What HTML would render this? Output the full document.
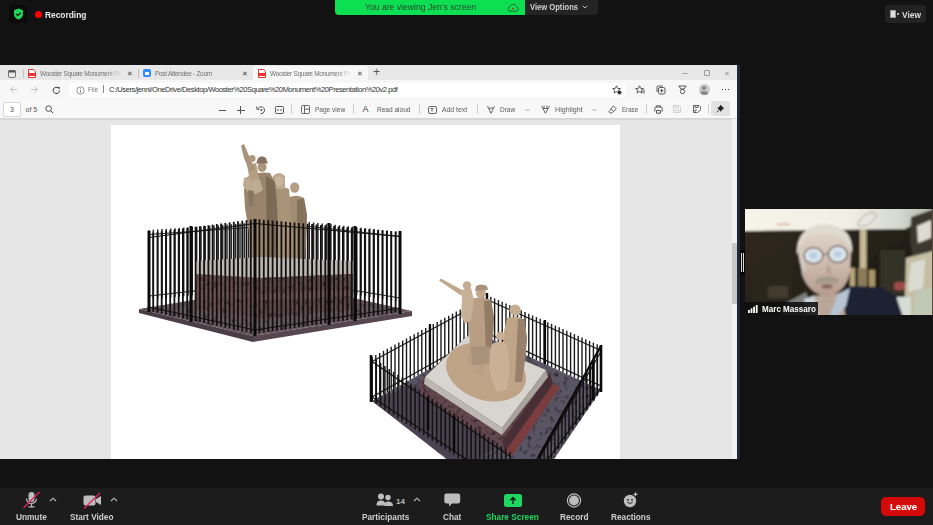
<!DOCTYPE html>
<html><head><meta charset="utf-8">
<style>
*{margin:0;padding:0;box-sizing:border-box}
html,body{width:933px;height:525px;overflow:hidden;background:#121212;font-family:"Liberation Sans",sans-serif}
.abs{position:absolute}
#top .rec{left:44.5px;top:8.5px;line-height:11px;color:#e8e8e8;font-size:9.8px;font-weight:bold;transform:scaleX(0.855);transform-origin:0 0}
#banner{left:335px;top:0;width:190px;height:15px;background:#0ce052;border-radius:0 0 0 4px}
#banner span{position:absolute;left:29.8px;top:1.5px;line-height:10px;font-size:8.8px;color:#27422e;white-space:nowrap;transform:scaleX(0.98);transform-origin:0 0}
#vopt{left:525px;top:0;width:73px;height:15px;background:#242424;border-radius:0 0 4px 0}
#vopt span{position:absolute;left:5px;top:1.5px;line-height:10px;font-size:9px;color:#d0d0d0;font-weight:bold;white-space:nowrap;transform:scaleX(0.845);transform-origin:0 0}
#viewbtn{left:885px;top:5px;width:41px;height:18px;background:#222;border-radius:3px}
#browser{left:0;top:65px;width:737px;height:394px;background:#e6e6e6;overflow:hidden}
#tabs{left:0;top:0;width:737px;height:15px;background:#e8e8e8}
#addr{left:0;top:15px;width:737px;height:19px;background:#f7f7f7}
#tool{left:0;top:34px;width:737px;height:20px;background:#f8f8f8;border-bottom:1px solid #d6d6d6;box-shadow:0 1px 1px rgba(0,0,0,0.06)}
#page{left:111px;top:60px;width:509px;height:340px;background:#fff}
#cam{left:745px;top:209px;width:188px;height:106px;background:#5a4a3a;overflow:hidden}
#bar{left:0;top:488px;width:933px;height:37px;background:#1c1c1c}
.lbl{position:absolute;top:23.5px;font-size:9.5px;line-height:10px;color:#cfcfcf;font-weight:bold;white-space:nowrap;transform:scaleX(0.87);transform-origin:0 0}
#leave{left:881px;top:497px;width:44px;height:19px;background:#d40a0a;border-radius:5px}
#leave span{position:absolute;left:9px;top:4px;line-height:11px;font-size:9.6px;color:#fff;font-weight:bold;white-space:nowrap}
.tt{top:3.8px;font-size:6.5px;line-height:9px;color:#707070;white-space:nowrap;overflow:hidden;letter-spacing:-0.3px;-webkit-mask-image:linear-gradient(90deg,#000 80%,transparent)}
.x{top:3.5px;font-size:7px;line-height:9px;color:#444}
.ut{top:4.5px;font-size:7.5px;line-height:9px;color:#333;white-space:nowrap}
.bt{font-size:7px;line-height:9px;color:#555;white-space:nowrap}
.tb{top:5.5px;font-size:7.6px;line-height:9px;color:#5a5a5a;white-space:nowrap;transform-origin:0 0}
.sep{top:5px;width:1px;height:10px;background:#cfcfcf}
</style></head><body>
<div id="top">
  <div class="abs" style="left:9px;top:5px;width:18px;height:18px;background:#0b0b0b;border-radius:4px"></div>
  <svg class="abs" style="left:13px;top:8px" width="11" height="12" viewBox="0 0 11 12"><path d="M5.5 0.5 L10 2.2 V6 C10 8.8 8 10.6 5.5 11.6 C3 10.6 1 8.8 1 6 V2.2Z" fill="#1fd65a"/><path d="M3.3 6 L4.9 7.5 L7.8 4.6" stroke="#0b0b0b" stroke-width="1.2" fill="none"/></svg>
  <div class="abs" style="left:34.5px;top:10.5px;width:7.5px;height:7.5px;border-radius:50%;background:#f00"></div>
  <div class="abs rec">Recording</div>
</div>
<div id="banner" class="abs"><span>You are viewing Jen's screen</span><svg class="abs" style="left:171.5px;top:3px" width="12" height="9" viewBox="0 0 12 9"><path d="M3 8.2H9.3A2.2 2.2 0 0 0 9.6 3.9A3.3 3.3 0 0 0 3.3 3.3A2.5 2.5 0 0 0 3 8.2Z" fill="none" stroke="#1d5a2e" stroke-width="0.9"/><circle cx="6" cy="5.6" r="0.9" fill="#e01010"/></svg></div>
<div id="vopt" class="abs"><span>View Options</span><svg class="abs" style="left:57px;top:5px" width="6" height="4" viewBox="0 0 6 4"><path d="M0.7 0.8L3 3L5.3 0.8" fill="none" stroke="#cfcfcf" stroke-width="0.9"/></svg></div>
<div id="viewbtn" class="abs"><div class="abs" style="left:5px;top:4.5px;width:6px;height:8.5px;background:#ddd;border:0.5px solid #999"></div><div class="abs" style="left:11.5px;top:8px;width:2px;height:2px;background:#ddd;border-radius:50%"></div><span style="position:absolute;left:16.5px;top:4.5px;line-height:10px;font-size:9.3px;color:#ddd;font-weight:bold;white-space:nowrap;transform:scaleX(0.9);transform-origin:0 0">View</span></div>

<div id="browser" class="abs">
  <div id="tabs" class="abs">
    <svg class="abs" style="left:8px;top:5px" width="8" height="8" viewBox="0 0 8 8"><rect x="0.5" y="0.5" width="7" height="7" rx="1.2" fill="none" stroke="#555" stroke-width="0.8"/><rect x="0.5" y="0.5" width="7" height="2" fill="#555"/></svg>
    <div class="abs" style="left:22.5px;top:4px;width:1px;height:9px;background:#c4c4c4"></div>
    <svg class="abs" style="left:28px;top:4px" width="8" height="9" viewBox="0 0 8 9"><path d="M0.5 0.5H5.5L7.5 2.5V8.5H0.5Z" fill="#fff" stroke="#d33" stroke-width="1"/><rect x="0.5" y="4" width="7" height="3" fill="#e33"/></svg>
    <div class="abs tt" style="left:40px;width:82px">Wooster Square Monument Presentation</div>
    <div class="abs x" style="left:127px">&#x2715;</div>
    <div class="abs" style="left:138px;top:4px;width:1px;height:9px;background:#c4c4c4"></div>
    <div class="abs" style="left:143px;top:4px;width:8px;height:8px;border-radius:2px;background:#2d8cff"></div>
    <div class="abs" style="left:144.5px;top:6.5px;width:4px;height:3px;background:#fff;border-radius:0.5px"></div>
    <div class="abs tt" style="left:155px;width:80px">Post Attendee - Zoom</div>
    <div class="abs x" style="left:242px">&#x2715;</div>
    <div class="abs" style="left:253px;top:1px;width:115px;height:14px;background:#f7f7f7;border-radius:3px 3px 0 0"></div>
    <svg class="abs" style="left:258px;top:4px" width="8" height="9" viewBox="0 0 8 9"><path d="M0.5 0.5H5.5L7.5 2.5V8.5H0.5Z" fill="#fff" stroke="#d33" stroke-width="1"/><rect x="0.5" y="4" width="7" height="3" fill="#e33"/></svg>
    <div class="abs tt" style="left:270px;width:82px">Wooster Square Monument Presentation</div>
    <div class="abs x" style="left:357px">&#x2715;</div>
    <div class="abs" style="left:373px;top:0px;font-size:12px;color:#555;line-height:15px">+</div>
    <div class="abs" style="left:682px;top:7.5px;width:5.5px;height:1px;background:#aaa"></div>
    <div class="abs" style="left:703.5px;top:5px;width:6px;height:6px;border:1px solid #999;border-radius:1px"></div>
    <div class="abs x" style="left:724px;color:#999">&#x2715;</div>
  </div>
  <div id="addr" class="abs">
    <svg class="abs" style="left:9px;top:5px" width="9" height="9" viewBox="0 0 9 9"><path d="M8 4.5H1.5M4.5 1.5L1.5 4.5L4.5 7.5" stroke="#bbb" stroke-width="0.9" fill="none"/></svg>
    <svg class="abs" style="left:30px;top:5px" width="9" height="9" viewBox="0 0 9 9"><path d="M1 4.5H7.5M4.5 1.5L7.5 4.5L4.5 7.5" stroke="#bbb" stroke-width="0.9" fill="none"/></svg>
    <svg class="abs" style="left:51.5px;top:5.5px" width="9" height="9" viewBox="0 0 9 9"><path d="M7.6 4.5A3.2 3.2 0 1 1 6.5 2" stroke="#333" stroke-width="1" fill="none"/><path d="M5.3 0.8L7.8 1.2L7.3 3.6Z" fill="#333"/></svg>
    <div class="abs" style="left:69px;top:3px;width:557px;height:14px;background:#fff;border-radius:3px"></div>
    <svg class="abs" style="left:75.5px;top:5.5px" width="9" height="9" viewBox="0 0 9 9"><circle cx="4.5" cy="4.5" r="3.7" stroke="#777" stroke-width="0.8" fill="none"/><path d="M4.5 4V6.6M4.5 2.4V3.1" stroke="#777" stroke-width="0.9"/></svg>
    <div class="abs ut" style="left:87.5px;color:#808080;transform:scaleX(0.85);transform-origin:0 0">File</div>
    <div class="abs" style="left:103px;top:5px;width:1px;height:8px;background:#888"></div>
    <div class="abs ut" style="left:109px;letter-spacing:-0.41px">C:/Users/jenni/OneDrive/Desktop/Wooster%20Square%20Monument%20Presentation%20v2.pdf</div>
    <svg class="abs" style="left:612px;top:5px" width="10" height="10" viewBox="0 0 10 10"><path d="M4.5 0.8L5.7 3.4L8.4 3.6L6.3 5.3L6.9 8L4.5 6.6L2.1 8L2.7 5.3L0.6 3.6L3.3 3.4Z" fill="none" stroke="#333" stroke-width="0.8"/><circle cx="7.5" cy="7.5" r="2" fill="#333"/></svg>
    <svg class="abs" style="left:635px;top:5px" width="10" height="10" viewBox="0 0 10 10"><path d="M4.5 0.8L5.7 3.4L8.4 3.6L6.3 5.3L6.9 8L4.5 6.6L2.1 8L2.7 5.3L0.6 3.6L3.3 3.4Z" fill="none" stroke="#333" stroke-width="0.8"/><path d="M8 4.5V8.5M9.2 4.5V8.5" stroke="#333" stroke-width="0.6"/></svg>
    <svg class="abs" style="left:656px;top:5px" width="10" height="10" viewBox="0 0 10 10"><rect x="2.5" y="2.5" width="6.5" height="6.5" rx="1.5" fill="none" stroke="#333" stroke-width="0.8"/><path d="M1 7V2.5A1.5 1.5 0 0 1 2.5 1H7" fill="none" stroke="#333" stroke-width="0.8"/><path d="M5.7 4V7.5M4 5.7H7.5" stroke="#333" stroke-width="0.8"/></svg>
    <svg class="abs" style="left:678px;top:5px" width="9" height="10" viewBox="0 0 9 10"><path d="M0.8 1H8.2L6 4H3Z" fill="none" stroke="#333" stroke-width="0.8"/><circle cx="4.5" cy="6.5" r="2.2" fill="none" stroke="#333" stroke-width="0.8"/></svg>
    <div class="abs" style="left:698.5px;top:4px;width:11px;height:11px;border-radius:50%;background:#c9c9c9;overflow:hidden"><div class="abs" style="left:3.5px;top:2px;width:4px;height:4px;border-radius:50%;background:#8a8a8a"></div><div class="abs" style="left:1.5px;top:7px;width:8px;height:6px;border-radius:50%;background:#8a8a8a"></div></div>
    <div class="abs" style="left:722px;top:9px;width:1.3px;height:1.3px;background:#333;box-shadow:3px 0 #333,6px 0 #333"></div>
  </div>
  <div id="tool" class="abs">
    <div class="abs" style="left:2.5px;top:2.5px;width:18.5px;height:15.5px;background:#fff;border:1px solid #d6d6d6;border-radius:2px"></div>
    <div class="abs bt" style="left:10px;top:6px">3</div>
    <div class="abs bt" style="left:25.5px;top:6px">of 5</div>
    <svg class="abs" style="left:45px;top:6px" width="9" height="9" viewBox="0 0 9 9"><circle cx="3.6" cy="3.6" r="2.8" fill="none" stroke="#444" stroke-width="0.9"/><path d="M5.6 5.6L8.2 8.2" stroke="#444" stroke-width="1"/></svg>
    <div class="abs" style="left:218.5px;top:10.5px;width:7px;height:0.9px;background:#555"></div>
    <div class="abs" style="left:237px;top:10.5px;width:7.5px;height:0.9px;background:#555"></div>
    <div class="abs" style="left:240.3px;top:7px;width:0.9px;height:7.5px;background:#555"></div>
    <svg class="abs" style="left:256px;top:6px" width="10" height="10" viewBox="0 0 10 10"><path d="M2 3.5A3.5 3.5 0 1 1 4.5 8.7" fill="none" stroke="#444" stroke-width="0.9"/><path d="M0.8 1.5V4.3H3.5" fill="none" stroke="#444" stroke-width="0.9"/><circle cx="5.3" cy="5" r="0.9" fill="#444"/></svg>
    <svg class="abs" style="left:275px;top:6.5px" width="9" height="8" viewBox="0 0 9 8"><rect x="0.5" y="0.5" width="8" height="7" rx="1" fill="none" stroke="#444" stroke-width="0.9"/><path d="M2 4H4M5 4H7" stroke="#444" stroke-width="0.9"/></svg>
    <div class="abs sep" style="left:291px"></div>
    <svg class="abs" style="left:301px;top:6px" width="9" height="9" viewBox="0 0 9 9"><rect x="0.5" y="0.5" width="8" height="8" rx="1" fill="none" stroke="#444" stroke-width="0.8"/><path d="M3.5 0.5V8.5M3.5 4.2H8.5" stroke="#444" stroke-width="0.8"/></svg>
    <div class="abs tb" style="left:315px;transform:scaleX(0.86)">Page view</div>
    <div class="abs sep" style="left:353px"></div>
    <div class="abs" style="left:362.5px;top:5px;font-size:9px;color:#444;line-height:10px">A</div>
    <div class="abs" style="left:368.5px;top:4px;font-size:5px;color:#444;line-height:6px">&#x2E0C;</div>
    <div class="abs tb" style="left:377px;transform:scaleX(0.86)">Read aloud</div>
    <div class="abs sep" style="left:418.5px"></div>
    <svg class="abs" style="left:428px;top:6.5px" width="9" height="8" viewBox="0 0 9 8"><rect x="0.5" y="0.5" width="8" height="7" rx="1.5" fill="none" stroke="#444" stroke-width="0.8"/><path d="M2.5 2.5H5.5M4 2.5V5.5" stroke="#444" stroke-width="0.8"/></svg>
    <div class="abs tb" style="left:442px;transform:scaleX(0.9)">Add text</div>
    <div class="abs sep" style="left:476.5px"></div>
    <svg class="abs" style="left:486.5px;top:6px" width="8" height="9" viewBox="0 0 8 9"><path d="M0.5 1L4 8.3L7.5 1" fill="none" stroke="#444" stroke-width="0.8"/><path d="M2 3.2H6" stroke="#444" stroke-width="0.8"/></svg>
    <div class="abs tb" style="left:500px;transform:scaleX(0.85)">Draw</div>
    <svg class="abs" style="left:524.5px;top:9px" width="5" height="4" viewBox="0 0 5 4"><path d="M0.5 1L2.5 3L4.5 1" fill="none" stroke="#888" stroke-width="0.7"/></svg>
    <svg class="abs" style="left:540.5px;top:6px" width="9" height="9" viewBox="0 0 9 9"><path d="M0.5 1L4.5 8.3L8.5 1" fill="none" stroke="#444" stroke-width="0.8"/><path d="M2.2 3.5H6.8M3 0.5V3.5M6 0.5V3.5" stroke="#444" stroke-width="0.8"/></svg>
    <div class="abs tb" style="left:554.8px;transform:scaleX(0.94)">Highlight</div>
    <svg class="abs" style="left:591.5px;top:9px" width="5" height="4" viewBox="0 0 5 4"><path d="M0.5 1L2.5 3L4.5 1" fill="none" stroke="#888" stroke-width="0.7"/></svg>
    <svg class="abs" style="left:607.5px;top:5.5px" width="9" height="9" viewBox="0 0 9 9"><path d="M5.3 0.8L8.2 3.7L3.9 8H2L0.8 6.8L5.3 0.8Z" fill="none" stroke="#444" stroke-width="0.8"/><path d="M3 3.8L5.2 6" stroke="#444" stroke-width="0.8"/></svg>
    <div class="abs tb" style="left:621.7px;transform:scaleX(0.81)">Erase</div>
    <div class="abs sep" style="left:646px"></div>
    <svg class="abs" style="left:653.5px;top:6px" width="9" height="9" viewBox="0 0 9 9"><path d="M0.8 6.5V3.5A1.5 1.5 0 0 1 2.3 2H6.7A1.5 1.5 0 0 1 8.2 3.5V6.5" fill="none" stroke="#444" stroke-width="0.9"/><path d="M2.5 5.5H6.5V8.2H2.5Z" fill="none" stroke="#444" stroke-width="0.9"/><path d="M2.5 2V0.8H6.5V2" fill="none" stroke="#444" stroke-width="0.8"/></svg>
    <svg class="abs" style="left:673px;top:6px" width="8" height="8" viewBox="0 0 8 8"><path d="M0.5 0.5H6L7.5 2V7.5H0.5Z" fill="none" stroke="#c8c8c8" stroke-width="0.8"/><path d="M2 0.5V2.5H5V0.5M2 7.5V5H6V7.5" fill="none" stroke="#c8c8c8" stroke-width="0.8"/></svg>
    <svg class="abs" style="left:692.5px;top:5.5px" width="9" height="9" viewBox="0 0 9 9"><path d="M0.5 0.5H6L7.5 2V4M4 7.5H0.5V0.5" fill="none" stroke="#444" stroke-width="0.8"/><path d="M2 0.5V2.5H5V0.5M2 7.5V5H4" fill="none" stroke="#444" stroke-width="0.8"/><path d="M8.3 4.5L5 7.8L4.3 8.4L4.6 7.2L7.6 4.2Z" fill="#444"/></svg>
    <div class="abs sep" style="left:708px"></div>
    <div class="abs" style="left:710.5px;top:2px;width:19px;height:15px;background:#e2e2e2;border-radius:2px"></div>
    <svg class="abs" style="left:715.5px;top:5px" width="9" height="9" viewBox="0 0 9 9"><path d="M4.5 0.8L8.2 4.5L7 5L5.2 6.8L5.2 8L1 3.8L2.2 3.8L4 2Z" fill="#222"/><path d="M2.5 6.5L0.6 8.4" stroke="#222" stroke-width="0.9"/></svg>
  </div>
  <div class="abs" style="left:731.5px;top:54px;width:5.5px;height:340px;background:#f2f2f2"></div>
  <div class="abs" style="left:732px;top:178px;width:5px;height:61px;background:#c8c8c8"></div>
  <div id="page" class="abs"><svg class="abs" style="left:0;top:0" width="509" height="340" viewBox="111 125 509 340"><defs><filter id="mot" x="0" y="0" width="100%" height="100%"><feTurbulence type="fractalNoise" baseFrequency="0.22" numOctaves="3" seed="7" result="n"/><feColorMatrix in="n" type="matrix" values="0 0 0 0 0  0 0 0 0 0  0 0 0 0 0  0 0 0 -2.2 1.05" result="a"/><feComposite in="a" in2="SourceGraphic" operator="in" result="d"/><feMerge><feMergeNode in="SourceGraphic"/><feMergeNode in="d"/></feMerge></filter></defs><polygon points="139.0,309.0 290.0,284.0 412.0,311.0 253.0,336.0" fill="#6a5a60" filter="url(#mot)"/><polygon points="139.0,309.0 253.0,336.0 253.0,342.0 139.0,313.0" fill="#4a3e44" /><polygon points="253.0,336.0 412.0,311.0 412.0,316.0 253.0,342.0" fill="#55474d" /><g stroke="#2a2a2a" stroke-width="1.5"><line x1="149.0" y1="230.0" x2="149.0" y2="300.0"/><line x1="153.3" y1="229.7" x2="153.3" y2="299.5"/><line x1="157.7" y1="229.4" x2="157.7" y2="299.0"/><line x1="162.0" y1="229.1" x2="162.0" y2="298.5"/><line x1="166.3" y1="228.8" x2="166.3" y2="298.1"/><line x1="170.7" y1="228.5" x2="170.7" y2="297.6"/><line x1="175.0" y1="228.2" x2="175.0" y2="297.1"/><line x1="179.3" y1="227.9" x2="179.3" y2="296.6"/><line x1="183.7" y1="227.6" x2="183.7" y2="296.1"/><line x1="188.0" y1="227.3" x2="188.0" y2="295.6"/><line x1="192.3" y1="227.0" x2="192.3" y2="295.2"/><line x1="196.7" y1="226.7" x2="196.7" y2="294.7"/><line x1="201.0" y1="226.4" x2="201.0" y2="294.2"/><line x1="205.3" y1="226.1" x2="205.3" y2="293.7"/><line x1="209.7" y1="225.8" x2="209.7" y2="293.2"/><line x1="214.0" y1="225.5" x2="214.0" y2="292.7"/><line x1="218.3" y1="225.2" x2="218.3" y2="292.2"/><line x1="222.7" y1="224.8" x2="222.7" y2="291.8"/><line x1="227.0" y1="224.5" x2="227.0" y2="291.3"/><line x1="231.3" y1="224.2" x2="231.3" y2="290.8"/><line x1="235.7" y1="223.9" x2="235.7" y2="290.3"/><line x1="240.0" y1="223.6" x2="240.0" y2="289.8"/><line x1="244.3" y1="223.3" x2="244.3" y2="289.3"/><line x1="248.7" y1="223.0" x2="248.7" y2="288.8"/><line x1="253.0" y1="222.7" x2="253.0" y2="288.4"/><line x1="257.3" y1="222.4" x2="257.3" y2="287.9"/><line x1="261.7" y1="222.1" x2="261.7" y2="287.4"/><line x1="266.0" y1="221.8" x2="266.0" y2="286.9"/><line x1="270.3" y1="221.5" x2="270.3" y2="286.4"/><line x1="274.7" y1="221.2" x2="274.7" y2="285.9"/><line x1="279.0" y1="220.9" x2="279.0" y2="285.5"/><line x1="283.3" y1="220.6" x2="283.3" y2="285.0"/><line x1="287.7" y1="220.3" x2="287.7" y2="284.5"/><line x1="292.0" y1="220.0" x2="292.0" y2="284.0"/><line x1="149.0" y1="234.5" x2="292.0" y2="224.5" stroke-width="1.2"/><line x1="149.0" y1="296.0" x2="292.0" y2="280.0" stroke-width="1.2"/></g><g stroke="#2a2a2a" stroke-width="1.5"><line x1="292.0" y1="220.0" x2="292.0" y2="284.0"/><line x1="296.3" y1="220.5" x2="296.3" y2="284.7"/><line x1="300.6" y1="221.0" x2="300.6" y2="285.4"/><line x1="305.0" y1="221.4" x2="305.0" y2="286.2"/><line x1="309.3" y1="221.9" x2="309.3" y2="286.9"/><line x1="313.6" y1="222.4" x2="313.6" y2="287.6"/><line x1="317.9" y1="222.9" x2="317.9" y2="288.3"/><line x1="322.2" y1="223.4" x2="322.2" y2="289.0"/><line x1="326.6" y1="223.8" x2="326.6" y2="289.8"/><line x1="330.9" y1="224.3" x2="330.9" y2="290.5"/><line x1="335.2" y1="224.8" x2="335.2" y2="291.2"/><line x1="339.5" y1="225.3" x2="339.5" y2="291.9"/><line x1="343.8" y1="225.8" x2="343.8" y2="292.6"/><line x1="348.2" y1="226.2" x2="348.2" y2="293.4"/><line x1="352.5" y1="226.7" x2="352.5" y2="294.1"/><line x1="356.8" y1="227.2" x2="356.8" y2="294.8"/><line x1="361.1" y1="227.7" x2="361.1" y2="295.5"/><line x1="365.4" y1="228.2" x2="365.4" y2="296.2"/><line x1="369.8" y1="228.6" x2="369.8" y2="297.0"/><line x1="374.1" y1="229.1" x2="374.1" y2="297.7"/><line x1="378.4" y1="229.6" x2="378.4" y2="298.4"/><line x1="382.7" y1="230.1" x2="382.7" y2="299.1"/><line x1="387.0" y1="230.6" x2="387.0" y2="299.8"/><line x1="391.4" y1="231.0" x2="391.4" y2="300.6"/><line x1="395.7" y1="231.5" x2="395.7" y2="301.3"/><line x1="400.0" y1="232.0" x2="400.0" y2="302.0"/><line x1="292.0" y1="224.5" x2="400.0" y2="236.5" stroke-width="1.2"/><line x1="292.0" y1="280.0" x2="400.0" y2="298.0" stroke-width="1.2"/></g><path d="M286 199 Q295 193 304 198 L307 215 L306 240 L304 262 L285 262 L284 232 L285 212 Z" fill="#a28c72"/><path d="M297 200 L304 198 L307 215 L306 240 L304 262 L297 262 Z" fill="#6e5e4e" opacity="0.55"/><ellipse cx="294.7" cy="187.5" rx="4.6" ry="5.2" fill="#b49e84"/><path d="M271 190 Q280 184 289 189 L291 210 L290 235 L288 258 L268 258 L270 230 L269 205 Z" fill="#a89278"/><path d="M273 187 L273 176 Q279 170 285 176 L285 188 Q279 191 273 187 Z" fill="#bca890"/><path d="M275 178 Q279 174 283 178 L283 184 Q279 187 275 184 Z" fill="#c8b49c"/><path d="M247 177 Q258 171 270 173 L275 182 L277 205 L278 232 L276 262 L250 262 L249 232 L245 208 L244 190 Z" fill="#9a846c"/><path d="M266 176 L275 182 L277 205 L278 232 L276 262 L267 262 Z" fill="#6a5848" opacity="0.6"/><path d="M244 178 Q252 174 260 180 L263 190 L256 194 L248 192 L243 186 Z" fill="#bfab92"/><path d="M247 165 L256 163 L259 178 L250 182 Z" fill="#b49e84"/><path d="M248 190 L254 191 L253 206 L249 206 Z" fill="#8a7662"/><path d="M241 145.5 L244 144 L249 156 L255 169 L250 172 L244 158 Z" fill="#a8927a"/><circle cx="252" cy="158.5" r="3.6" fill="#ae9a80"/><ellipse cx="262" cy="167" rx="4.5" ry="5" fill="#ab957c"/><path d="M256 163.5 L268 163.5 L267 161.5 Q266.5 156.5 262 156.5 Q257.5 156.5 257 161.5 Z" fill="#857260"/><polygon points="196.0,261.0 262.0,257.0 353.0,261.0 353.0,274.0 262.0,278.0 196.0,274.0" fill="#bdb8b2" /><polygon points="196.0,274.0 262.0,278.0 353.0,274.0 353.0,309.0 262.0,318.0 196.0,310.0" fill="#6a5050" filter="url(#mot)"/><polygon points="262.0,278.0 353.0,274.0 353.0,309.0 262.0,318.0" fill="#604848" filter="url(#mot)"/><polygon points="200.0,290.0 262.0,294.0 350.0,290.0 350.0,296.0 262.0,300.0 200.0,296.0" fill="#6e5252" /><g stroke="#101010" stroke-width="1.8"><line x1="149.0" y1="233.0" x2="149.0" y2="311.0"/><line x1="153.2" y1="232.4" x2="153.2" y2="311.9"/><line x1="157.5" y1="231.9" x2="157.5" y2="312.8"/><line x1="161.7" y1="231.3" x2="161.7" y2="313.8"/><line x1="166.0" y1="230.8" x2="166.0" y2="314.7"/><line x1="170.2" y1="230.2" x2="170.2" y2="315.6"/><line x1="174.4" y1="229.6" x2="174.4" y2="316.5"/><line x1="178.7" y1="229.1" x2="178.7" y2="317.4"/><line x1="182.9" y1="228.5" x2="182.9" y2="318.4"/><line x1="187.2" y1="228.0" x2="187.2" y2="319.3"/><line x1="191.4" y1="227.4" x2="191.4" y2="320.2"/><line x1="195.6" y1="226.8" x2="195.6" y2="321.1"/><line x1="199.9" y1="226.3" x2="199.9" y2="322.0"/><line x1="204.1" y1="225.7" x2="204.1" y2="323.0"/><line x1="208.4" y1="225.2" x2="208.4" y2="323.9"/><line x1="212.6" y1="224.6" x2="212.6" y2="324.8"/><line x1="216.8" y1="224.0" x2="216.8" y2="325.7"/><line x1="221.1" y1="223.5" x2="221.1" y2="326.6"/><line x1="225.3" y1="222.9" x2="225.3" y2="327.6"/><line x1="229.6" y1="222.4" x2="229.6" y2="328.5"/><line x1="233.8" y1="221.8" x2="233.8" y2="329.4"/><line x1="238.0" y1="221.2" x2="238.0" y2="330.3"/><line x1="242.3" y1="220.7" x2="242.3" y2="331.2"/><line x1="246.5" y1="220.1" x2="246.5" y2="332.2"/><line x1="250.8" y1="219.6" x2="250.8" y2="333.1"/><line x1="255.0" y1="219.0" x2="255.0" y2="334.0"/><line x1="149.0" y1="237.5" x2="255.0" y2="223.5" stroke-width="1.2"/><line x1="149.0" y1="307.0" x2="255.0" y2="330.0" stroke-width="1.2"/></g><g stroke="#101010" stroke-width="1.8"><line x1="255.0" y1="219.0" x2="255.0" y2="334.0"/><line x1="259.4" y1="219.4" x2="259.4" y2="333.3"/><line x1="263.8" y1="219.8" x2="263.8" y2="332.7"/><line x1="268.2" y1="220.2" x2="268.2" y2="332.0"/><line x1="272.6" y1="220.6" x2="272.6" y2="331.3"/><line x1="277.0" y1="221.0" x2="277.0" y2="330.7"/><line x1="281.4" y1="221.4" x2="281.4" y2="330.0"/><line x1="285.8" y1="221.8" x2="285.8" y2="329.3"/><line x1="290.2" y1="222.2" x2="290.2" y2="328.7"/><line x1="294.5" y1="222.5" x2="294.5" y2="328.0"/><line x1="298.9" y1="222.9" x2="298.9" y2="327.3"/><line x1="303.3" y1="223.3" x2="303.3" y2="326.7"/><line x1="307.7" y1="223.7" x2="307.7" y2="326.0"/><line x1="312.1" y1="224.1" x2="312.1" y2="325.3"/><line x1="316.5" y1="224.5" x2="316.5" y2="324.7"/><line x1="320.9" y1="224.9" x2="320.9" y2="324.0"/><line x1="325.3" y1="225.3" x2="325.3" y2="323.3"/><line x1="329.7" y1="225.7" x2="329.7" y2="322.7"/><line x1="334.1" y1="226.1" x2="334.1" y2="322.0"/><line x1="338.5" y1="226.5" x2="338.5" y2="321.3"/><line x1="342.9" y1="226.9" x2="342.9" y2="320.7"/><line x1="347.3" y1="227.3" x2="347.3" y2="320.0"/><line x1="351.7" y1="227.7" x2="351.7" y2="319.3"/><line x1="356.1" y1="228.1" x2="356.1" y2="318.7"/><line x1="360.5" y1="228.5" x2="360.5" y2="318.0"/><line x1="364.8" y1="228.8" x2="364.8" y2="317.3"/><line x1="369.2" y1="229.2" x2="369.2" y2="316.7"/><line x1="373.6" y1="229.6" x2="373.6" y2="316.0"/><line x1="378.0" y1="230.0" x2="378.0" y2="315.3"/><line x1="382.4" y1="230.4" x2="382.4" y2="314.7"/><line x1="386.8" y1="230.8" x2="386.8" y2="314.0"/><line x1="391.2" y1="231.2" x2="391.2" y2="313.3"/><line x1="395.6" y1="231.6" x2="395.6" y2="312.7"/><line x1="400.0" y1="232.0" x2="400.0" y2="312.0"/><line x1="255.0" y1="223.5" x2="400.0" y2="236.5" stroke-width="1.2"/><line x1="255.0" y1="330.0" x2="400.0" y2="308.0" stroke-width="1.2"/></g><line x1="149" y1="231" x2="149" y2="312" stroke="#0a0a0a" stroke-width="3"/><line x1="255" y1="219" x2="255" y2="336" stroke="#0a0a0a" stroke-width="3"/><line x1="400" y1="231" x2="400" y2="314" stroke="#0a0a0a" stroke-width="3"/><line x1="191" y1="226" x2="191" y2="322" stroke="#0a0a0a" stroke-width="3"/><line x1="329" y1="223" x2="329" y2="325" stroke="#0a0a0a" stroke-width="3"/><line x1="355" y1="226" x2="355" y2="321" stroke="#0a0a0a" stroke-width="3"/><polygon points="372.0,401.0 487.0,337.0 601.0,390.0 548.0,468.0 458.0,468.0" fill="#5a5464" filter="url(#mot)"/><polygon points="372.0,401.0 418.0,383.0 502.0,445.0 460.0,468.0" fill="#4a4250" /><g stroke="#1a1a1a" stroke-width="1.4"><line x1="372.0" y1="357.0" x2="372.0" y2="401.0"/><line x1="375.8" y1="354.9" x2="375.8" y2="398.9"/><line x1="379.7" y1="352.9" x2="379.7" y2="396.7"/><line x1="383.5" y1="350.8" x2="383.5" y2="394.6"/><line x1="387.3" y1="348.7" x2="387.3" y2="392.5"/><line x1="391.2" y1="346.7" x2="391.2" y2="390.3"/><line x1="395.0" y1="344.6" x2="395.0" y2="388.2"/><line x1="398.8" y1="342.5" x2="398.8" y2="386.1"/><line x1="402.7" y1="340.5" x2="402.7" y2="383.9"/><line x1="406.5" y1="338.4" x2="406.5" y2="381.8"/><line x1="410.3" y1="336.3" x2="410.3" y2="379.7"/><line x1="414.2" y1="334.3" x2="414.2" y2="377.5"/><line x1="418.0" y1="332.2" x2="418.0" y2="375.4"/><line x1="421.8" y1="330.1" x2="421.8" y2="373.3"/><line x1="425.7" y1="328.1" x2="425.7" y2="371.1"/><line x1="429.5" y1="326.0" x2="429.5" y2="369.0"/><line x1="433.3" y1="323.9" x2="433.3" y2="366.9"/><line x1="437.2" y1="321.9" x2="437.2" y2="364.7"/><line x1="441.0" y1="319.8" x2="441.0" y2="362.6"/><line x1="444.8" y1="317.7" x2="444.8" y2="360.5"/><line x1="448.7" y1="315.7" x2="448.7" y2="358.3"/><line x1="452.5" y1="313.6" x2="452.5" y2="356.2"/><line x1="456.3" y1="311.5" x2="456.3" y2="354.1"/><line x1="460.2" y1="309.5" x2="460.2" y2="351.9"/><line x1="464.0" y1="307.4" x2="464.0" y2="349.8"/><line x1="467.8" y1="305.3" x2="467.8" y2="347.7"/><line x1="471.7" y1="303.3" x2="471.7" y2="345.5"/><line x1="475.5" y1="301.2" x2="475.5" y2="343.4"/><line x1="479.3" y1="299.1" x2="479.3" y2="341.3"/><line x1="483.2" y1="297.1" x2="483.2" y2="339.1"/><line x1="487.0" y1="295.0" x2="487.0" y2="337.0"/><line x1="372.0" y1="361.5" x2="487.0" y2="299.5" stroke-width="1.2"/><line x1="372.0" y1="397.0" x2="487.0" y2="333.0" stroke-width="1.2"/></g><g stroke="#1a1a1a" stroke-width="1.4"><line x1="487.0" y1="295.0" x2="487.0" y2="337.0"/><line x1="490.8" y1="296.7" x2="490.8" y2="338.8"/><line x1="494.6" y1="298.4" x2="494.6" y2="340.5"/><line x1="498.4" y1="300.1" x2="498.4" y2="342.3"/><line x1="502.2" y1="301.8" x2="502.2" y2="344.1"/><line x1="506.0" y1="303.5" x2="506.0" y2="345.8"/><line x1="509.8" y1="305.2" x2="509.8" y2="347.6"/><line x1="513.6" y1="306.9" x2="513.6" y2="349.4"/><line x1="517.4" y1="308.6" x2="517.4" y2="351.1"/><line x1="521.2" y1="310.3" x2="521.2" y2="352.9"/><line x1="525.0" y1="312.0" x2="525.0" y2="354.7"/><line x1="528.8" y1="313.7" x2="528.8" y2="356.4"/><line x1="532.6" y1="315.4" x2="532.6" y2="358.2"/><line x1="536.4" y1="317.1" x2="536.4" y2="360.0"/><line x1="540.2" y1="318.8" x2="540.2" y2="361.7"/><line x1="544.0" y1="320.5" x2="544.0" y2="363.5"/><line x1="547.8" y1="322.2" x2="547.8" y2="365.3"/><line x1="551.6" y1="323.9" x2="551.6" y2="367.0"/><line x1="555.4" y1="325.6" x2="555.4" y2="368.8"/><line x1="559.2" y1="327.3" x2="559.2" y2="370.6"/><line x1="563.0" y1="329.0" x2="563.0" y2="372.3"/><line x1="566.8" y1="330.7" x2="566.8" y2="374.1"/><line x1="570.6" y1="332.4" x2="570.6" y2="375.9"/><line x1="574.4" y1="334.1" x2="574.4" y2="377.6"/><line x1="578.2" y1="335.8" x2="578.2" y2="379.4"/><line x1="582.0" y1="337.5" x2="582.0" y2="381.2"/><line x1="585.8" y1="339.2" x2="585.8" y2="382.9"/><line x1="589.6" y1="340.9" x2="589.6" y2="384.7"/><line x1="593.4" y1="342.6" x2="593.4" y2="386.5"/><line x1="597.2" y1="344.3" x2="597.2" y2="388.2"/><line x1="601.0" y1="346.0" x2="601.0" y2="390.0"/><line x1="487.0" y1="299.5" x2="601.0" y2="350.5" stroke-width="1.2"/><line x1="487.0" y1="333.0" x2="601.0" y2="386.0" stroke-width="1.2"/></g><line x1="487" y1="293" x2="487" y2="338" stroke="#0a0a0a" stroke-width="2.4"/><line x1="430" y1="324" x2="430" y2="370" stroke="#0a0a0a" stroke-width="2.2"/><line x1="545" y1="320" x2="545" y2="364" stroke="#0a0a0a" stroke-width="2.2"/><polygon points="418.0,383.0 466.0,337.0 550.0,372.0 553.0,384.0 505.0,452.0 419.0,396.0" fill="#624650" filter="url(#mot)"/><polygon points="502.0,441.0 550.0,374.0 553.0,384.0 505.0,452.0" fill="#4a2e36" /><polygon points="505.0,452.0 553.0,384.0 560.0,387.0 512.0,456.0" fill="#7a3c3c" /><polygon points="425.0,377.0 467.0,336.0 546.0,370.0 502.0,428.0" fill="#d8d4cf" /><polygon points="425.0,377.0 502.0,428.0 502.0,435.0 424.0,384.0" fill="#bdb7b1" /><polygon points="502.0,428.0 546.0,370.0 548.0,377.0 502.0,435.0" fill="#aaa49e" /><ellipse cx="486" cy="372" rx="41" ry="28" transform="rotate(18 486 372)" fill="#bfa386"/><path d="M471 299 Q481 296 491 300 L494 318 L493 335 L491 347 L486 352 L484 364 L482 374 L476 373 L476 362 L471 366 L467 360 L470 346 L469 330 L468 315 Z" fill="#b89f84"/><path d="M484 301 L491 300 L494 318 L493 335 L491 347 L486 352 Z" fill="#927c66"/><path d="M471 347 L489 346 L489 364 L472 365 Z" fill="#a8927a"/><path d="M439 280.5 L441 278.5 L463 290.5 L461 295.5 Z" fill="#c0a88e"/><path d="M461 290 L471 288 L474 300 L471 320 L465 324 L461 316 L462 300 Z" fill="#c6b096"/><circle cx="467" cy="285.5" r="4.2" fill="#c4ac92"/><circle cx="481" cy="293.5" r="5" fill="#c2a88e"/><path d="M475 291 L488 290 L487 286 Q481 283 476 286 Z" fill="#a8927a"/><path d="M507 318 Q515 315 524 319 L527 338 L525 360 L522 382 L509 384 L505 360 L503 336 Z" fill="#bea488"/><path d="M518 319 L524 319 L527 338 L525 360 L522 382 L515 382 Z" fill="#98806a"/><circle cx="515" cy="310" r="5.6" fill="#c6ac90"/><path d="M492 344 Q500 339 507 344 L510 368 L507 390 L496 392 L489 370 Z" fill="#cab196"/><circle cx="500.5" cy="336" r="4.3" fill="#c8ae92"/><g stroke="#111" stroke-width="1.5"><line x1="372.0" y1="357.0" x2="372.0" y2="401.0"/><line x1="376.3" y1="360.0" x2="376.3" y2="403.8"/><line x1="380.6" y1="362.9" x2="380.6" y2="406.7"/><line x1="384.9" y1="365.9" x2="384.9" y2="409.5"/><line x1="389.2" y1="368.9" x2="389.2" y2="412.4"/><line x1="393.6" y1="371.8" x2="393.6" y2="415.2"/><line x1="397.9" y1="374.8" x2="397.9" y2="418.1"/><line x1="402.2" y1="377.8" x2="402.2" y2="420.9"/><line x1="406.5" y1="380.8" x2="406.5" y2="423.8"/><line x1="410.8" y1="383.7" x2="410.8" y2="426.6"/><line x1="415.1" y1="386.7" x2="415.1" y2="429.4"/><line x1="419.4" y1="389.7" x2="419.4" y2="432.3"/><line x1="423.8" y1="392.6" x2="423.8" y2="435.1"/><line x1="428.1" y1="395.6" x2="428.1" y2="438.0"/><line x1="432.4" y1="398.6" x2="432.4" y2="440.8"/><line x1="436.7" y1="401.5" x2="436.7" y2="443.7"/><line x1="441.0" y1="404.5" x2="441.0" y2="446.5"/><line x1="445.3" y1="407.5" x2="445.3" y2="449.3"/><line x1="449.6" y1="410.4" x2="449.6" y2="452.2"/><line x1="453.9" y1="413.4" x2="453.9" y2="455.0"/><line x1="458.2" y1="416.4" x2="458.2" y2="457.9"/><line x1="462.6" y1="419.3" x2="462.6" y2="460.7"/><line x1="466.9" y1="422.3" x2="466.9" y2="463.6"/><line x1="471.2" y1="425.3" x2="471.2" y2="466.4"/><line x1="475.5" y1="428.2" x2="475.5" y2="469.2"/><line x1="479.8" y1="431.2" x2="479.8" y2="472.1"/><line x1="484.1" y1="434.2" x2="484.1" y2="474.9"/><line x1="488.4" y1="437.2" x2="488.4" y2="477.8"/><line x1="492.8" y1="440.1" x2="492.8" y2="480.6"/><line x1="497.1" y1="443.1" x2="497.1" y2="483.5"/><line x1="501.4" y1="446.1" x2="501.4" y2="486.3"/><line x1="505.7" y1="449.0" x2="505.7" y2="489.2"/><line x1="510.0" y1="452.0" x2="510.0" y2="492.0"/><line x1="372.0" y1="361.5" x2="510.0" y2="456.5" stroke-width="1.2"/><line x1="372.0" y1="397.0" x2="510.0" y2="488.0" stroke-width="1.2"/></g><g stroke="#111" stroke-width="1.5"><line x1="601.0" y1="347.0" x2="601.0" y2="391.0"/><line x1="597.4" y1="353.2" x2="597.4" y2="395.8"/><line x1="593.9" y1="359.3" x2="593.9" y2="400.7"/><line x1="590.3" y1="365.5" x2="590.3" y2="405.5"/><line x1="586.8" y1="371.7" x2="586.8" y2="410.3"/><line x1="583.2" y1="377.8" x2="583.2" y2="415.2"/><line x1="579.7" y1="384.0" x2="579.7" y2="420.0"/><line x1="576.1" y1="390.2" x2="576.1" y2="424.8"/><line x1="572.6" y1="396.3" x2="572.6" y2="429.7"/><line x1="569.0" y1="402.5" x2="569.0" y2="434.5"/><line x1="565.4" y1="408.7" x2="565.4" y2="439.3"/><line x1="561.9" y1="414.8" x2="561.9" y2="444.2"/><line x1="558.3" y1="421.0" x2="558.3" y2="449.0"/><line x1="554.8" y1="427.2" x2="554.8" y2="453.8"/><line x1="551.2" y1="433.3" x2="551.2" y2="458.7"/><line x1="547.7" y1="439.5" x2="547.7" y2="463.5"/><line x1="544.1" y1="445.7" x2="544.1" y2="468.3"/><line x1="540.6" y1="451.8" x2="540.6" y2="473.2"/><line x1="537.0" y1="458.0" x2="537.0" y2="478.0"/><line x1="601.0" y1="351.5" x2="537.0" y2="462.5" stroke-width="1.2"/><line x1="601.0" y1="387.0" x2="537.0" y2="474.0" stroke-width="1.2"/></g><line x1="601" y1="346" x2="538" y2="458" stroke="#0a0a0a" stroke-width="2.4"/><line x1="371" y1="355" x2="371" y2="402" stroke="#0a0a0a" stroke-width="2.6"/><line x1="601" y1="345" x2="601" y2="392" stroke="#0a0a0a" stroke-width="2.6"/><line x1="428" y1="397" x2="428" y2="430" stroke="#0a0a0a" stroke-width="2.6"/><line x1="454" y1="416" x2="454" y2="452" stroke="#0a0a0a" stroke-width="2.6"/><line x1="593" y1="360" x2="593" y2="400" stroke="#0a0a0a" stroke-width="2.6"/></svg></div>
</div>
<div class="abs" style="left:737px;top:65px;width:3px;height:394px;background:#1f2838"></div>
<div class="abs" style="left:740px;top:250px;width:5px;height:25px;background:#050505"></div>
<div class="abs" style="left:740.5px;top:253px;width:1.2px;height:19px;background:#ddd"></div>
<div class="abs" style="left:742.8px;top:253px;width:1.2px;height:19px;background:#ddd"></div>

<div id="cam" class="abs"><svg class="abs" style="left:0;top:0" width="187" height="106" viewBox="745 209 187 106"><defs><linearGradient id="ceil" x1="0" y1="0" x2="1" y2="0"><stop offset="0" stop-color="#f6f4e8"/><stop offset="0.55" stop-color="#f1efe6"/><stop offset="0.8" stop-color="#d6dad0"/><stop offset="1" stop-color="#aeb4a8"/></linearGradient><linearGradient id="wall" x1="0" y1="0" x2="1" y2="1"><stop offset="0" stop-color="#342b20"/><stop offset="0.6" stop-color="#231f18"/><stop offset="1" stop-color="#1c1914"/></linearGradient><linearGradient id="face" x1="0" y1="0" x2="0" y2="1"><stop offset="0" stop-color="#e4d8ce"/><stop offset="0.5" stop-color="#d0beb2"/><stop offset="1" stop-color="#b49a8c"/></linearGradient><radialGradient id="lens" cx="0.5" cy="0.5" r="0.5"><stop offset="0" stop-color="#a8c0d8"/><stop offset="0.6" stop-color="#d8e4ee"/><stop offset="1" stop-color="#eef2f2"/></radialGradient><filter id="bl" x="-10%" y="-10%" width="120%" height="120%"><feGaussianBlur stdDeviation="0.8"/></filter></defs><g filter="url(#bl)"><rect x="740" y="204" width="197" height="116" fill="url(#wall)"/><polygon points="740.0,204.0 937.0,204.0 937.0,212.0 905.0,229.0 740.0,231.0" fill="url(#ceil)" /><rect x="777" y="223" width="13" height="2.5" fill="#e4c4b4"/><rect x="752" y="240" width="40" height="60" fill="#2e2820" opacity="0.7"/><rect x="768" y="286" width="20" height="12" fill="#4a4034" opacity="0.8"/><polygon points="911.0,217.0 937.0,208.0 937.0,252.0 913.0,257.0 910.0,240.0" fill="#3c382e" /><polygon points="917.0,226.0 931.0,220.0 931.0,238.0 918.0,243.0" fill="#dcdcd2" /><polygon points="906.0,258.0 937.0,250.0 937.0,320.0 904.0,320.0 905.0,292.0" fill="#c4bea2" /><polygon points="911.0,263.0 925.0,259.0 923.0,288.0 908.0,292.0" fill="#dadcd2" /><polygon points="915.0,290.0 937.0,287.0 937.0,320.0 913.0,320.0" fill="#c0c8b6" /><rect x="880" y="250" width="25" height="45" fill="#3a3c2c" opacity="0.7"/><rect x="894" y="282" width="11" height="8" rx="3" fill="#a04848"/><rect x="897" y="297" width="14" height="22" fill="#d6dcd6"/><rect x="860" y="229" width="6.5" height="40" fill="#c8b996"/><ellipse cx="867" cy="219.5" rx="10.5" ry="4.8" transform="rotate(-35 867 219.5)" fill="#e6e6de" stroke="#9a9a90" stroke-width="0.8"/><rect x="850" y="268" width="5" height="22" fill="#b8a478"/><rect x="858" y="268" width="9" height="22" fill="#8a7a58"/><rect x="869" y="270" width="6" height="20" fill="#a89468"/><polygon points="836.0,296.0 848.0,286.0 880.0,287.0 896.0,296.0 904.0,320.0 828.0,320.0" fill="#1b2030" /><polygon points="780.0,320.0 786.0,303.0 806.0,292.0 816.0,320.0" fill="#7e7e7c" /><polygon points="812.0,296.0 842.0,293.0 846.0,320.0 814.0,320.0" fill="#b8a698" /><polygon points="804.0,299.0 814.0,296.0 820.0,320.0 808.0,320.0" fill="#cdd3da" /><polygon points="838.0,294.0 850.0,288.0 846.0,306.0 834.0,320.0 828.0,320.0" fill="#b8c4d4" /><path d="M799 246 Q800 226 825 225 Q851 226 851 248 L850 272 Q846 292 827 297 Q808 293 802 274 Z" fill="url(#face)"/><path d="M797 256 Q795 226 825 224 Q854 226 852 254 Q849 240 836 235 Q820 231 808 236 Q800 242 797 256 Z" fill="#e0dbd0"/><path d="M798 250 Q799 262 803 272 L806 270 Q802 260 802 248 Z" fill="#d4cec2"/><ellipse cx="813.5" cy="255.7" rx="9.3" ry="7.9" fill="url(#lens)" stroke="#54443e" stroke-width="1.3"/><ellipse cx="837.8" cy="254.2" rx="9.4" ry="8.2" fill="url(#lens)" stroke="#54443e" stroke-width="1.3"/><path d="M822.8 255 Q825.5 253 828.4 254.5" fill="none" stroke="#54443e" stroke-width="1"/><path d="M828 262 L826 273 L832 274 Z" fill="#b89c90"/><path d="M815 280 Q826 273 839 279 L837 284 Q826 280 817 285 Z" fill="#a49a8c"/><path d="M821 285 Q827 283 833 285 L832 288 Q827 290 822 288 Z" fill="#8a6a62"/></g></svg><div class="abs" style="left:0;top:93px;width:73px;height:13px;background:rgba(12,12,12,0.88)"></div><svg class="abs" style="left:3px;top:96px" width="11" height="8" viewBox="0 0 11 8"><rect x="0" y="5" width="1.8" height="3" fill="#fff"/><rect x="2.6" y="3.4" width="1.8" height="4.6" fill="#fff"/><rect x="5.2" y="1.7" width="1.8" height="6.3" fill="#fff"/><rect x="7.8" y="0" width="1.8" height="8" fill="#fff"/></svg><div class="abs" style="left:17px;top:94.5px;font-size:9.2px;line-height:10px;font-weight:bold;color:#fff;white-space:nowrap;transform:scaleX(0.88);transform-origin:0 0">Marc Massaro</div></div>

<div id="bar" class="abs">
  <svg class="abs" style="left:22px;top:3px" width="20" height="18" viewBox="0 0 20 18"><rect x="6.5" y="1" width="6" height="10" rx="3" fill="#bdbdbd"/><path d="M4.5 7.5A5 5 0 0 0 14.5 7.5" fill="none" stroke="#bdbdbd" stroke-width="1.2"/><path d="M9.5 12.5V15.5M6.5 15.8H12.5" stroke="#bdbdbd" stroke-width="1.2"/><path d="M1.5 17L17.5 1" stroke="#e0245e" stroke-width="1.3"/></svg>
  <svg class="abs" style="left:49px;top:9px" width="8" height="5" viewBox="0 0 8 5"><path d="M1 4L4 1.2L7 4" fill="none" stroke="#bdbdbd" stroke-width="1.1"/></svg>
  <svg class="abs" style="left:82px;top:4px" width="21" height="17" viewBox="0 0 21 17"><rect x="1.5" y="3.5" width="12" height="10" rx="2" fill="#bdbdbd"/><path d="M14 7L19 4V13L14 10Z" fill="#bdbdbd"/><path d="M2 16.5L18 1" stroke="#e0245e" stroke-width="1.3"/></svg>
  <svg class="abs" style="left:110px;top:9px" width="8" height="5" viewBox="0 0 8 5"><path d="M1 4L4 1.2L7 4" fill="none" stroke="#bdbdbd" stroke-width="1.1"/></svg>
  <svg class="abs" style="left:376px;top:5px" width="18" height="14" viewBox="0 0 18 14"><circle cx="5" cy="3.5" r="3" fill="#bdbdbd"/><circle cx="12" cy="4.5" r="2.7" fill="#bdbdbd"/><path d="M0.5 12.5C0.5 8.5 2.5 7.5 5 7.5C7.5 7.5 9.5 8.5 9.5 12.5Z" fill="#bdbdbd"/><path d="M8.5 13C8.5 9.5 10 8.5 12 8.5C14.5 8.5 17 9.5 17 13Z" fill="#bdbdbd"/></svg>
  <div class="abs" style="left:396px;top:10px;font-size:8px;line-height:8px;font-weight:bold;color:#bdbdbd">14</div>
  <svg class="abs" style="left:413px;top:9px" width="8" height="5" viewBox="0 0 8 5"><path d="M1 4L4 1.2L7 4" fill="none" stroke="#bdbdbd" stroke-width="1.1"/></svg>
  <svg class="abs" style="left:444px;top:5px" width="17" height="14" viewBox="0 0 17 14"><path d="M2.5 0.5H14A2.2 2.2 0 0 1 16.2 2.7V8.3A2.2 2.2 0 0 1 14 10.5H8L5 13.5V10.5H2.5A2.2 2.2 0 0 1 0.3 8.3V2.7A2.2 2.2 0 0 1 2.5 0.5Z" fill="#bdbdbd"/></svg>
  <div class="abs" style="left:504px;top:5.5px;width:17.5px;height:13px;background:#1ed760;border-radius:2.5px"></div>
  <svg class="abs" style="left:509px;top:7.5px" width="8" height="9" viewBox="0 0 8 9"><path d="M4 8V2M1.5 4.3L4 1.5L6.5 4.3" fill="none" stroke="#111" stroke-width="1.3"/></svg>
  <svg class="abs" style="left:565.5px;top:5px" width="16" height="15" viewBox="0 0 16 15"><circle cx="8" cy="7.5" r="6.6" fill="none" stroke="#bdbdbd" stroke-width="1.2"/><circle cx="8" cy="7.5" r="4.9" fill="#bdbdbd"/></svg>
  <svg class="abs" style="left:623px;top:3px" width="16" height="17" viewBox="0 0 16 17"><circle cx="7" cy="10" r="6.2" fill="#bdbdbd"/><circle cx="5" cy="8.8" r="0.9" fill="#1c1c1c"/><circle cx="9" cy="8.8" r="0.9" fill="#1c1c1c"/><path d="M4.3 11.2Q7 13.8 9.7 11.2" fill="none" stroke="#1c1c1c" stroke-width="0.9"/><path d="M12.5 0.8V5.8M10 3.3H15" stroke="#1c1c1c" stroke-width="2.6"/><path d="M12.5 1.3V5.3M10.5 3.3H14.5" stroke="#bdbdbd" stroke-width="1.2"/></svg>
  <div class="lbl" style="left:15.5px">Unmute</div>
  <div class="lbl" style="left:70px">Start Video</div>
  <div class="lbl" style="left:361.5px">Participants</div>
  <div class="lbl" style="left:443px">Chat</div>
  <div class="lbl" style="left:485.5px;color:#1ed760">Share Screen</div>
  <div class="lbl" style="left:559.5px">Record</div>
  <div class="lbl" style="left:610.5px">Reactions</div>
</div>
<div id="leave" class="abs"><span>Leave</span></div>
</body></html>
